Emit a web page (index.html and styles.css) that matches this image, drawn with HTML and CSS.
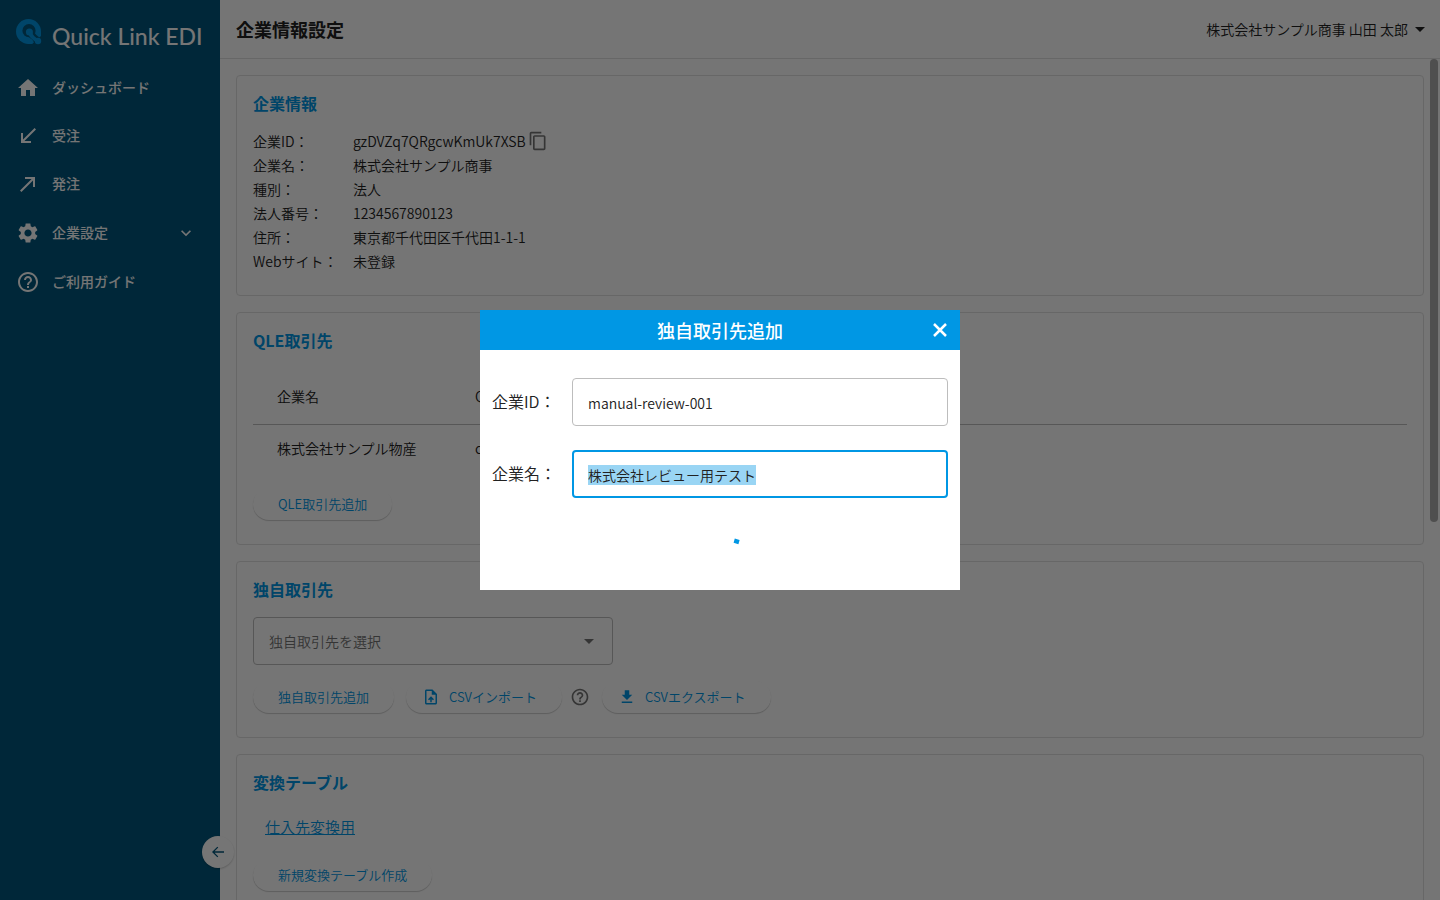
FILE: index.html
```html
<!DOCTYPE html>
<html lang="ja">
<head>
<meta charset="utf-8">
<title>企業情報設定 | Quick Link EDI</title>
<meta name="viewport" content="width=device-width, initial-scale=1">
<link rel="stylesheet" href="styles.css">
</head>
<body>
<div class="app">
  <aside class="sidebar">
    <a class="brand" href="#">
      <svg class="brand-mark" viewBox="0 0 26 26" aria-hidden="true">
        <path class="mark-fill" d="M12.500 0A12.500 12.500 0 0 0 12.500 25H16L25 17V12.500A12.500 12.500 0 0 0 12.500 0Z"/>
        <circle class="mark-gap" cx="13" cy="11.700" r="6.600"/>
        <path class="mark-gap-line" d="M14 13Q16 18 24 23"/>
        <circle class="mark-fill" cx="13.400" cy="13" r="3.500"/>
        <path class="mark-line" d="M14 13Q15 19 22.300 21.800"/>
        <circle class="mark-fill" cx="22" cy="22" r="3.200"/>
        <path class="mark-fill" d="M8 19.500Q15 18 16.800 21.500Q17.400 23.500 16 25H12Z"/>
      </svg>
      <span class="brand-name">Quick Link EDI</span>
    </a>
    <nav class="nav">
      <a class="nav-item" href="#"><svg class="icon" viewBox="0 0 24 24"><path d="M10 20v-6h4v6h5v-8h3L12 3 2 12h3v8z"/></svg><span class="nav-label">ダッシュボード</span></a>
      <a class="nav-item" href="#"><svg class="icon" viewBox="0 0 24 24"><path d="M20 5.410 18.590 4 7 15.590V9H5v10h10v-2H8.410z"/></svg><span class="nav-label">受注</span></a>
      <a class="nav-item" href="#"><svg class="icon" viewBox="0 0 24 24"><path d="M9 5v2h6.590L4 18.590 5.410 20 17 8.410V15h2V5z"/></svg><span class="nav-label">発注</span></a>
      <button class="nav-item nav-group" type="button" aria-expanded="false"><svg class="icon" viewBox="0 0 24 24"><path d="M19.140 12.940c.04-.3.060-.61.060-.94 0-.32-.02-.64-.07-.94l2.030-1.580c.18-.14.230-.41.120-.61l-1.920-3.320c-.12-.22-.37-.29-.59-.22l-2.390.96c-.5-.38-1.030-.7-1.620-.94l-.36-2.540c-.04-.24-.24-.41-.48-.41h-3.840c-.24 0-.43.17-.47.41l-.36 2.540c-.59.24-1.130.57-1.620.94l-2.390-.96c-.22-.08-.47 0-.59.22L2.740 8.870c-.12.210-.08.470.12.610l2.030 1.580c-.05.3-.09.630-.09.940s.02.640.07.940l-2.030 1.580c-.18.140-.23.410-.12.610l1.920 3.320c.12.220.37.290.59.220l2.390-.96c.5.380 1.030.7 1.620.94l.36 2.540c.05.240.24.410.48.410h3.840c.24 0 .44-.17.470-.41l.36-2.540c.59-.24 1.130-.56 1.620-.94l2.390.96c.22.080.47 0 .59-.22l1.920-3.320c.12-.22.070-.47-.12-.61l-2.010-1.580zM12 15.600c-1.980 0-3.600-1.620-3.600-3.600s1.620-3.600 3.600-3.600 3.600 1.620 3.600 3.600-1.620 3.600-3.600 3.600z"/></svg><span class="nav-label">企業設定</span><svg class="icon icon-md nav-chevron" viewBox="0 0 24 24"><path d="M16.590 8.590 12 13.170 7.410 8.590 6 10l6 6 6-6z"/></svg></button>
      <a class="nav-item" href="#"><svg class="icon" viewBox="0 0 24 24"><path d="M11 18h2v-2h-2v2zm1-16C6.480 2 2 6.480 2 12s4.480 10 10 10 10-4.480 10-10S17.520 2 12 2zm0 18c-4.410 0-8-3.590-8-8s3.590-8 8-8 8 3.590 8 8-3.590 8-8 8zm0-14c-2.210 0-4 1.790-4 4h2c0-1.100.9-2 2-2s2 .9 2 2c0 2-3 1.750-3 5h2c0-2.250 3-2.500 3-5 0-2.210-1.790-4-4-4z"/></svg><span class="nav-label">ご利用ガイド</span></a>
    </nav>
    <button class="collapse" type="button" aria-label="メニューを閉じる"><svg class="icon icon-sm" viewBox="0 0 24 24"><path d="M21 11H6.830l5.590-5.590L11 4l-8 8 8 8 1.410-1.410L6.830 13H21v-2z"/></svg></button>
  </aside>

  <div class="page">
    <header class="topbar">
      <h1 class="page-title">企業情報設定</h1>
      <button class="account" type="button"><span>株式会社サンプル商事 山田 太郎</span><svg class="caret" viewBox="0 0 10 5"><path d="M0 0l5 5 5-5z"/></svg></button>
    </header>

    <main class="content">
      <section class="card">
        <h2 class="card-title">企業情報</h2>
        <dl class="info">
          <dt>企業ID：</dt><dd>gzDVZq7QRgcwKmUk7XSB<button class="icon-button" type="button" aria-label="コピー"><svg class="icon icon-md" viewBox="0 0 24 24"><path d="M16 1H4c-1.100 0-2 .9-2 2v14h2V3h12V1zm3 4H8c-1.100 0-2 .9-2 2v14c0 1.100.9 2 2 2h11c1.100 0 2-.9 2-2V7c0-1.100-.9-2-2-2zm0 16H8V7h11v14z"/></svg></button></dd>
          <dt>企業名：</dt><dd>株式会社サンプル商事</dd>
          <dt>種別：</dt><dd>法人</dd>
          <dt>法人番号：</dt><dd>1234567890123</dd>
          <dt>住所：</dt><dd>東京都千代田区千代田1-1-1</dd>
          <dt>Webサイト：</dt><dd>未登録</dd>
        </dl>
      </section>

      <section class="card">
        <h2 class="card-title">QLE取引先</h2>
        <table class="partners">
          <thead><tr><th scope="col">企業名</th><th scope="col">Q</th></tr></thead>
          <tbody><tr><td>株式会社サンプル物産</td><td>c</td></tr></tbody>
        </table>
        <div class="actions"><button class="pill" type="button">QLE取引先追加</button></div>
      </section>

      <section class="card">
        <h2 class="card-title">独自取引先</h2>
        <div class="select-wrap">
          <select class="select" aria-label="独自取引先"><option>独自取引先を選択</option></select>
          <svg class="caret select-caret" viewBox="0 0 10 5"><path d="M0 0l5 5 5-5z"/></svg>
        </div>
        <div class="actions">
          <button class="pill" type="button">独自取引先追加</button>
          <button class="pill pill-icon" type="button"><svg class="icon icon-pill" viewBox="0 0 24 24"><path d="M14 2H6c-1.100 0-1.990.9-1.990 2L4 20c0 1.100.89 2 1.990 2H18c1.100 0 2-.9 2-2V8l-6-6zm4 18H6V4h7v5h5v11zM8 15.010l1.410 1.410L11 14.840V19h2v-4.160l1.590 1.590L16 15.010 12.010 11z"/></svg>CSVインポート</button>
          <button class="icon-button help" type="button" aria-label="ヘルプ"><svg class="icon icon-md" viewBox="0 0 24 24"><path d="M11 18h2v-2h-2v2zm1-16C6.480 2 2 6.480 2 12s4.480 10 10 10 10-4.480 10-10S17.520 2 12 2zm0 18c-4.410 0-8-3.590-8-8s3.590-8 8-8 8 3.590 8 8-3.590 8-8 8zm0-14c-2.210 0-4 1.790-4 4h2c0-1.100.9-2 2-2s2 .9 2 2c0 2-3 1.750-3 5h2c0-2.250 3-2.500 3-5 0-2.210-1.790-4-4-4z"/></svg></button>
          <button class="pill pill-icon" type="button"><svg class="icon icon-pill" viewBox="0 0 24 24"><path d="M5 20h14v-2H5v2zM19 9h-4V3H9v6H5l7 7 7-7z"/></svg>CSVエクスポート</button>
        </div>
      </section>

      <section class="card">
        <h2 class="card-title">変換テーブル</h2>
        <a class="table-link" href="#">仕入先変換用</a>
        <div class="actions actions-wide"><button class="pill" type="button">新規変換テーブル作成</button></div>
      </section>
    </main>
    <div class="scroll-thumb"></div>
  </div>
</div>

<div class="overlay">
  <form class="dialog" role="dialog" aria-modal="true" aria-labelledby="dialog-title">
    <header class="dialog-head">
      <h2 class="dialog-title" id="dialog-title">独自取引先追加</h2>
      <button class="dialog-close" type="button" aria-label="閉じる"><svg class="close-icon" viewBox="0 0 16 16"><path d="M2 2l12 12M14 2L2 14"/></svg></button>
    </header>
    <div class="dialog-body">
      <div class="field"><label for="company-id">企業ID：</label><input id="company-id" class="input" type="text" value="manual-review-001"></div>
      <div class="field"><label for="company-name">企業名：</label><input id="company-name" class="input" type="text" value="株式会社レビュー用テスト" autofocus></div>
      <div class="progress" role="progressbar" aria-label="送信中"><svg class="spinner" viewBox="0 0 40 40"><path d="M37.200 17.300L36 21.500"/></svg></div>
    </div>
  </form>
</div>
<script src="main.js"></script>
</body>
</html>
```
FILE: styles.css
```css
:root {
  --primary: #0097e4;
  --navy: #00567c;
  --text: #212121;
  --muted: #757575;
  --line: #e0e0e0;
}

* { box-sizing: border-box; }

body {
  margin: 0;
  color: var(--text);
  background: #fff;
  font-family: "Noto Sans CJK JP", sans-serif;
  font-size: 14px;
  font-weight: 350;
  line-height: 24px;
}

h1, h2, dl, dd { margin: 0; }

button, input, select { font: inherit; color: inherit; }

button {
  padding: 0;
  border: 0;
  background: none;
  cursor: pointer;
}

a { color: inherit; text-decoration: none; }

svg { display: block; flex: none; }

.icon { width: 24px; height: 24px; fill: currentColor; }
.icon-md { width: 20px; height: 20px; }
.icon-pill { width: 18px; height: 18px; }
.icon-sm { width: 16px; height: 16px; }
.caret { width: 10px; height: 5px; fill: currentColor; }

.app { display: flex; height: 100vh; overflow: hidden; }

/* Sidebar */
.sidebar {
  position: relative;
  z-index: 1;
  flex: none;
  width: 220px;
  color: #fff;
  background: var(--navy);
}

.brand {
  display: flex;
  align-items: center;
  gap: 10px;
  height: 64px;
  padding-left: 16px;
}
.brand-mark { width: 26px; height: 26px; }
.mark-fill { fill: var(--primary); }
.mark-gap { fill: var(--navy); }
.mark-gap-line { fill: none; stroke: var(--navy); stroke-width: 7; }
.mark-line { fill: none; stroke: var(--primary); stroke-width: 4; }
.brand-name {
  padding-top: 8px;
  font-family: Lato, sans-serif;
  font-size: 23px;
  font-weight: 500;
  white-space: nowrap;
}

.nav { display: flex; flex-direction: column; }
.nav-item {
  display: flex;
  align-items: center;
  gap: 12px;
  height: 48px;
  padding: 0 24px 0 16px;
  font-weight: 500;
  text-align: left;
}
.nav-group { height: 50px; }
.nav-label { padding-bottom: 2px; }
.nav-chevron { margin-left: auto; }

.collapse {
  position: absolute;
  right: -14px;
  bottom: 32px;
  display: grid;
  place-items: center;
  width: 32px;
  height: 32px;
  border-radius: 50%;
  color: var(--navy);
  background: #fff;
  box-shadow: 0 1px 2px rgba(0, 0, 0, .2);
}

/* Page */
.page {
  position: relative;
  display: flex;
  flex: 1;
  flex-direction: column;
  min-width: 0;
}

.topbar {
  display: flex;
  flex: none;
  align-items: center;
  justify-content: space-between;
  height: 59px;
  padding: 0 15px 0 16px;
  border-bottom: 1px solid var(--line);
}
.page-title { font-size: 18px; font-weight: 700; }
.account { display: flex; align-items: center; gap: 7px; }

.content {
  display: flex;
  flex: 1;
  flex-direction: column;
  gap: 16px;
  min-height: 0;
  padding: 16px;
  overflow: hidden;
}

.scroll-thumb {
  position: absolute;
  top: 59px;
  right: 2px;
  width: 8px;
  height: 55%;
  max-height: 463px;
  border-radius: 4px;
  background: #acacac;
}

.card {
  flex: none;
  padding: 15px 16px 22px;
  border: 1px solid var(--line);
  border-radius: 4px;
}
.card-title {
  color: var(--primary);
  font-size: 16px;
  font-weight: 700;
}

.info {
  display: grid;
  grid-template-columns: 100px 1fr;
  padding-top: 14px;
}
.info dd { display: flex; align-items: center; gap: 2px; }
.icon-button { color: var(--muted); }

.partners {
  width: 100%;
  margin-top: 16px;
  border-collapse: collapse;
}
.partners th, .partners td {
  height: 48px;
  padding: 0 24px;
  font-weight: 350;
  text-align: left;
}
.partners th { height: 56px; border-bottom: 1px solid #bdbdbd; }
.partners th:first-child { width: 198px; }

.actions {
  display: flex;
  align-items: center;
  padding-bottom: 2px;
  margin-top: 16px;
}
.actions-wide { margin-top: 20px; }
.pill {
  display: flex;
  align-items: center;
  height: 32px;
  padding: 0 25px;
  border-radius: 16px;
  color: var(--primary);
  background: #fff;
  box-shadow: 0 1px 1px rgba(0, 0, 0, .2);
  font-size: 13px;
}
.pill + .pill { margin-left: 12px; }
.pill-icon { gap: 9px; padding-left: 16px; }
.help { margin: 0 12px 0 8px; }

.select-wrap {
  position: relative;
  width: 360px;
  margin-top: 16px;
}
.select {
  display: block;
  width: 100%;
  height: 48px;
  padding: 0 15px;
  border: 1px solid #bdbdbd;
  border-radius: 4px;
  color: var(--muted);
  background: #fff;
  appearance: none;
}
.select-caret {
  position: absolute;
  top: 22px;
  right: 19px;
  color: var(--muted);
  pointer-events: none;
}

.table-link {
  display: inline-block;
  margin: 21px 12px 0;
  color: var(--primary);
  font-size: 15px;
  text-decoration: underline;
}

/* Dialog */
.overlay {
  position: fixed;
  inset: 0;
  z-index: 10;
  display: grid;
  place-items: center;
  background: rgba(0, 0, 0, .54);
}
.dialog { width: 480px; max-width: 100%; background: #fff; }
.dialog-head {
  display: grid;
  grid-template-columns: 40px 1fr 40px;
  align-items: center;
  height: 40px;
  color: #fff;
  background: var(--primary);
}
.dialog-title {
  grid-column: 2;
  font-size: 18px;
  font-weight: 500;
  text-align: center;
}
.dialog-close { display: grid; place-items: center; height: 40px; }
.close-icon {
  width: 16px;
  height: 16px;
  fill: none;
  stroke: currentColor;
  stroke-width: 2.5;
}
.dialog-body {
  display: flex;
  flex-direction: column;
  gap: 24px;
  padding: 28px 12px;
}
.field {
  display: grid;
  grid-template-columns: 80px 1fr;
  align-items: center;
}
.field label { padding-bottom: 2px; font-size: 16px; }
.input {
  width: 100%;
  height: 48px;
  padding: 2px 15px 0;
  border: 1px solid #bdbdbd;
  border-radius: 4px;
  outline: 0;
  background: #fff;
}
.input:focus {
  padding: 2px 14px 0;
  border: 2px solid var(--primary);
}
.input::selection { color: var(--text); background: rgba(0, 151, 228, .4); }
.progress { display: flex; justify-content: center; }
.spinner {
  width: 40px;
  height: 40px;
  fill: none;
  stroke: var(--primary);
  stroke-width: 5;
}
```
FILE: main.js
```js
const nameInput = document.getElementById("company-name");
nameInput.focus();
nameInput.select();
```
